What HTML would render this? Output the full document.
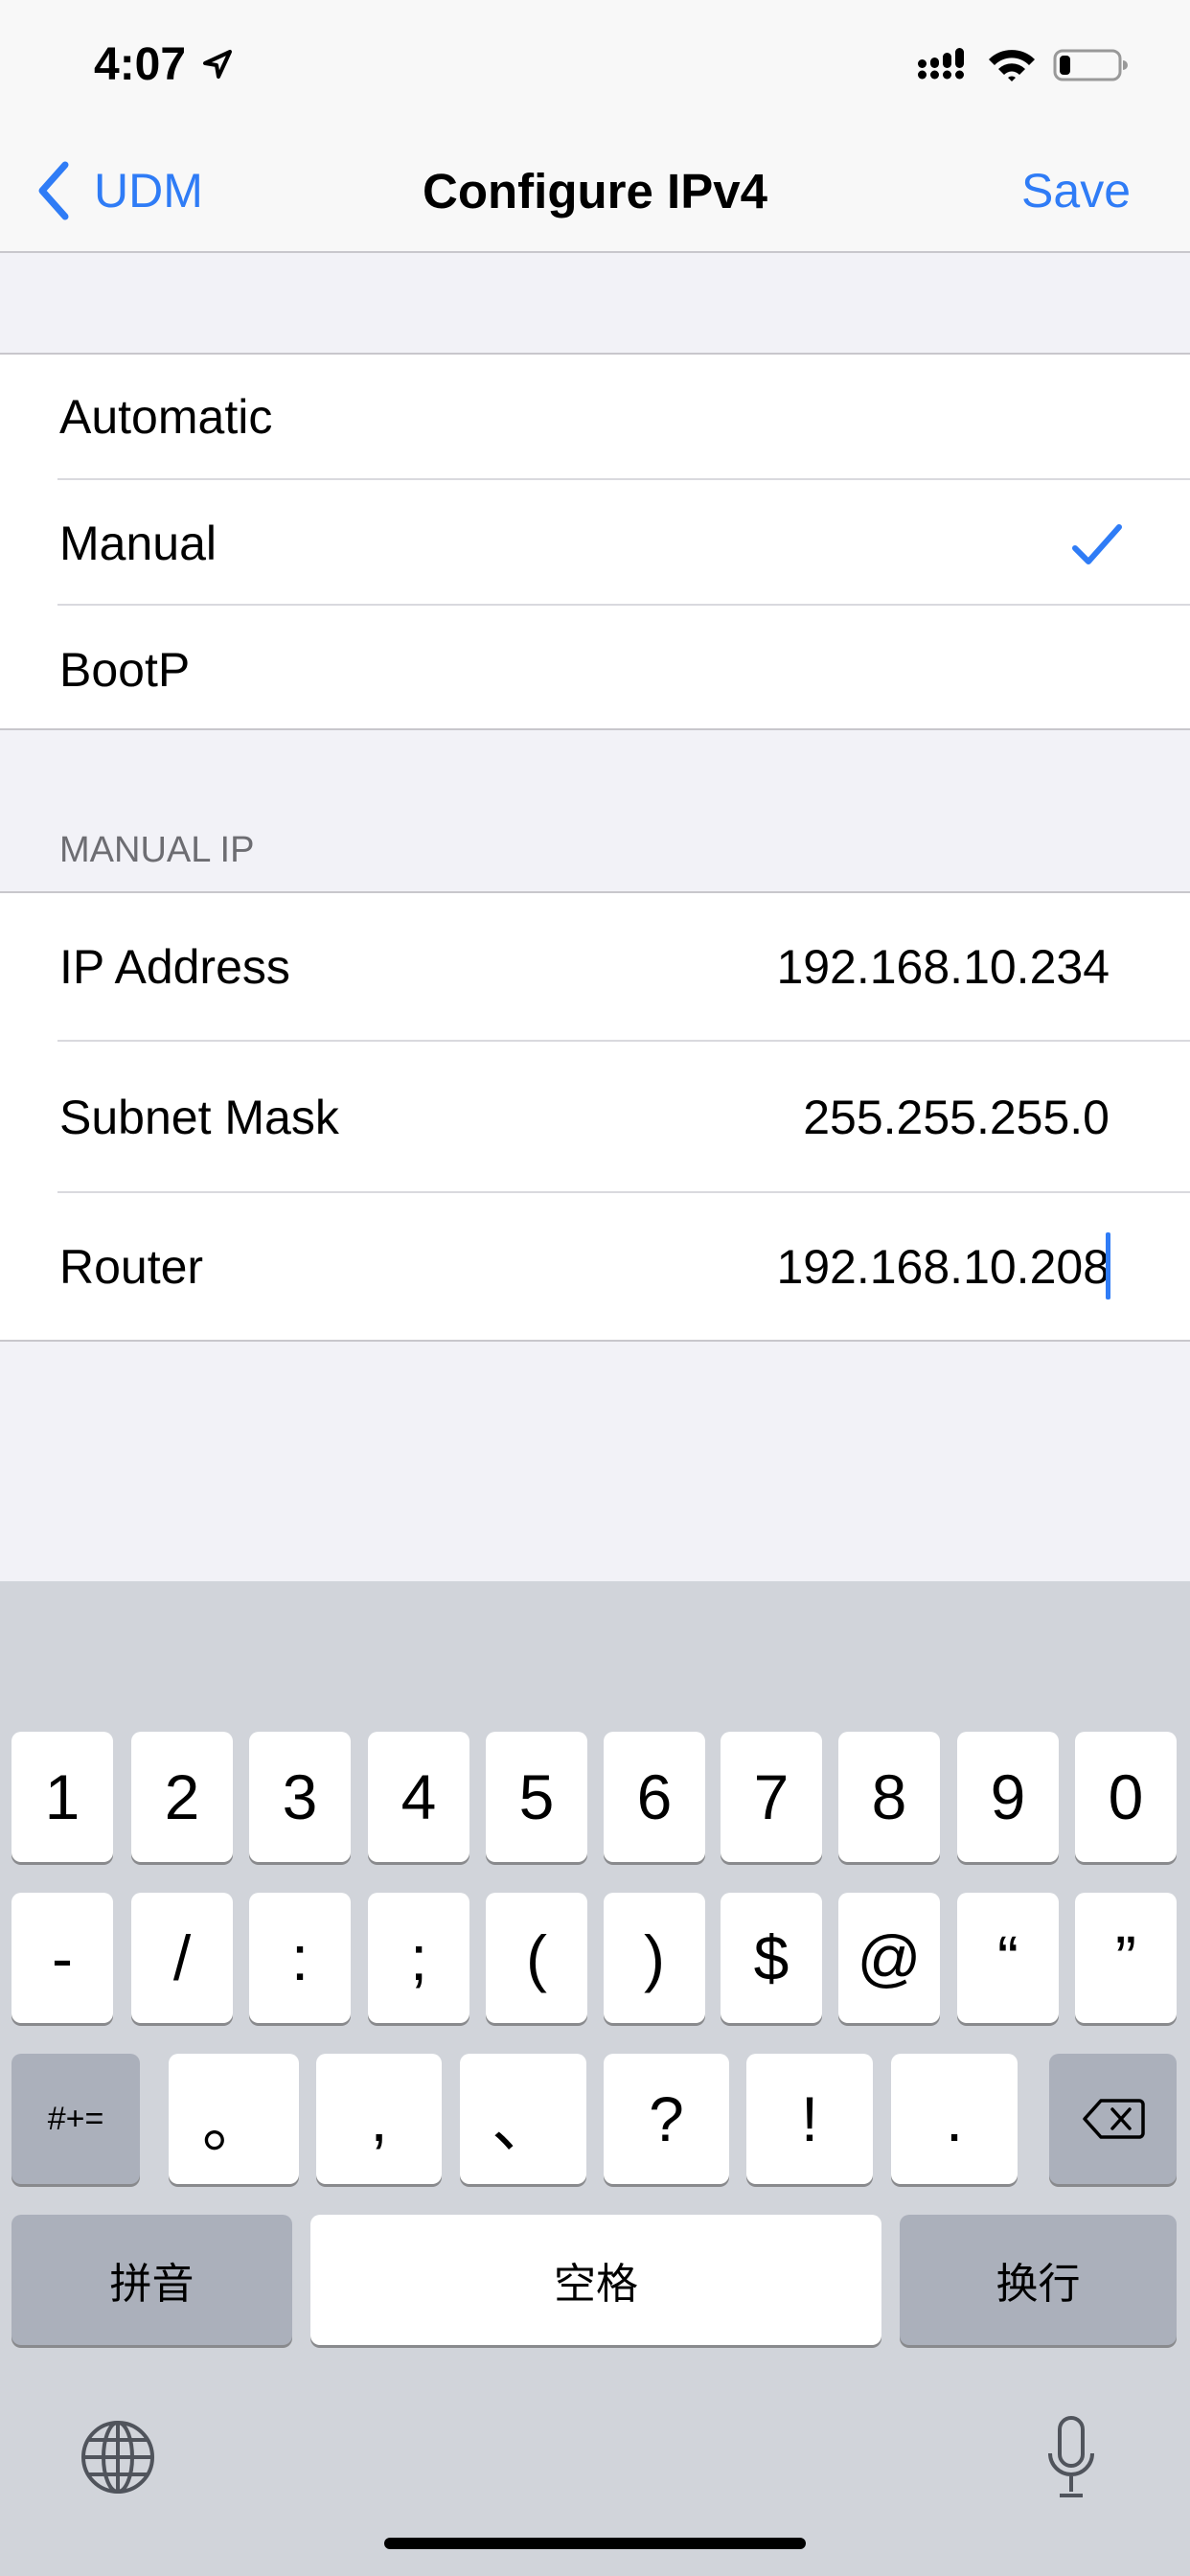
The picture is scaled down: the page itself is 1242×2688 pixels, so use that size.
<!DOCTYPE html>
<html><head><meta charset="utf-8"><style>
*{margin:0;padding:0;box-sizing:border-box}
body{width:1242px;height:2688px;background:#f2f2f7;font-family:"Liberation Sans","Noto Sans CJK SC",sans-serif;position:relative;overflow:hidden;color:#000}
.abs{position:absolute}
.nav{left:0;top:0;width:1242px;height:264px;background:#f8f8f8;border-bottom:2px solid #c8c7cc}
.white{background:#fff;left:0;width:1242px}
.row{position:absolute;left:62px;font-size:50px}
.sep{position:absolute;left:60px;right:0;height:2px;background:#d9d9de}
.hl{position:absolute;left:0;right:0;height:2px;background:#c8c7cc}
.val{position:absolute;right:84px;font-size:50px;text-align:right}
.kb{left:0;top:1650px;width:1242px;height:1038px;background:#d1d4da}
.k{position:absolute;background:#fff;border-radius:10px;box-shadow:0 3px 0 #898a8d;display:flex;align-items:center;justify-content:center;font-size:66px;height:136px}
.g{background:#abb0bb}
</style></head><body>
<div class="abs nav"></div>
<div class="abs" style="left:98px;top:40px;font-size:48px;font-weight:bold">4:07</div>
<svg class="abs" style="left:210px;top:50px" width="34" height="34" viewBox="0 0 34 34"><path d="M4 16 L30 4 L18 30 L16 18 Z" fill="none" stroke="#000" stroke-width="4" stroke-linejoin="round"/></svg>
<svg class="abs" style="left:958px;top:48px" width="220" height="40" viewBox="0 0 220 40">
<rect x="0" y="14" width="9" height="9" rx="4.5"/><rect x="13" y="12" width="9" height="11" rx="4.5"/><rect x="26" y="7" width="9" height="16" rx="4.5"/><rect x="39" y="2" width="9" height="21" rx="4.5"/>
<circle cx="4.5" cy="30" r="4.5"/><circle cx="17.5" cy="30" r="4.5"/><circle cx="30.5" cy="30" r="4.5"/><circle cx="43.5" cy="30" r="4.5"/>
<path d="M74 14 A34 34 0 0 1 122 14 L116 20 A25 25 0 0 0 80 20 Z"/><path d="M84 24 A20 20 0 0 1 112 24 L106 30 A11 11 0 0 0 90 30 Z"/><path d="M94 33 L98 37 L102 33 A6 6 0 0 0 94 33Z"/>
<rect x="143" y="5" width="68" height="30" rx="8" fill="none" stroke="#999" stroke-width="3"/><rect x="148" y="10" width="11" height="20" rx="4"/><path d="M214 15 a5 5 0 0 1 0 10 Z" fill="#999"/></svg>
<svg class="abs" style="left:36px;top:168px" width="40" height="62" viewBox="0 0 40 62"><path d="M32 4 L8 31 L32 58" fill="none" stroke="#2f7cf6" stroke-width="7" stroke-linecap="round" stroke-linejoin="round"/></svg>
<div class="abs" style="left:98px;top:170px;font-size:50px;color:#2f7cf6">UDM</div>
<div class="abs" style="left:0;width:1242px;top:170px;text-align:center;font-size:51px;font-weight:bold">Configure IPv4</div>
<div class="abs" style="right:62px;top:170px;font-size:50px;color:#2f7cf6">Save</div>

<div class="abs white" style="top:368px;height:394px">
<div class="hl" style="top:0"></div>
<div class="row" style="top:38px">Automatic</div>
<div class="sep" style="top:131px"></div>
<div class="row" style="top:170px">Manual</div>
<svg class="abs" style="left:1118px;top:178px" width="54" height="46" viewBox="0 0 54 46"><path d="M4 26 L18 40 L50 4" fill="none" stroke="#2f7cf6" stroke-width="6" stroke-linecap="round" stroke-linejoin="round"/></svg>
<div class="sep" style="top:262px"></div>
<div class="row" style="top:302px">BootP</div>
<div class="hl" style="top:392px"></div>
</div>
<div class="abs" style="left:62px;top:866px;font-size:38px;color:#6d6d72">MANUAL IP</div>
<div class="abs white" style="top:930px;height:470px">
<div class="hl" style="top:0"></div>
<div class="row" style="top:50px">IP Address</div><div class="val" style="top:50px">192.168.10.234</div>
<div class="sep" style="top:155px"></div>
<div class="row" style="top:207px">Subnet Mask</div><div class="val" style="top:207px">255.255.255.0</div>
<div class="sep" style="top:313px"></div>
<div class="row" style="top:363px">Router</div><div class="val" style="top:363px">192.168.10.208</div>
<div class="abs" style="left:1154px;top:356px;width:5px;height:70px;background:#2f7cf6;border-radius:2px"></div>
<div class="hl" style="top:468px"></div>
</div>

<div class="abs kb"></div>
<div class="k" style="left:12px;top:1807px;width:106px">1</div>
<div class="k" style="left:137px;top:1807px;width:106px">2</div>
<div class="k" style="left:260px;top:1807px;width:106px">3</div>
<div class="k" style="left:384px;top:1807px;width:106px">4</div>
<div class="k" style="left:507px;top:1807px;width:106px">5</div>
<div class="k" style="left:630px;top:1807px;width:106px">6</div>
<div class="k" style="left:752px;top:1807px;width:106px">7</div>
<div class="k" style="left:875px;top:1807px;width:106px">8</div>
<div class="k" style="left:999px;top:1807px;width:106px">9</div>
<div class="k" style="left:1122px;top:1807px;width:106px">0</div>
<div class="k" style="left:12px;top:1975px;width:106px">-</div>
<div class="k" style="left:137px;top:1975px;width:106px">/</div>
<div class="k" style="left:260px;top:1975px;width:106px">:</div>
<div class="k" style="left:384px;top:1975px;width:106px">;</div>
<div class="k" style="left:507px;top:1975px;width:106px">(</div>
<div class="k" style="left:630px;top:1975px;width:106px">)</div>
<div class="k" style="left:752px;top:1975px;width:106px">$</div>
<div class="k" style="left:875px;top:1975px;width:106px">@</div>
<div class="k" style="left:999px;top:1975px;width:106px">“</div>
<div class="k" style="left:1122px;top:1975px;width:106px">”</div>
<div class="k g" style="left:12px;top:2143px;width:134px;font-size:34px">#+=</div>
<div class="k" style="left:176px;top:2143px;width:136px">。</div>
<div class="k" style="left:330px;top:2143px;width:131px">,</div>
<div class="k" style="left:480px;top:2143px;width:132px">、</div>
<div class="k" style="left:630px;top:2143px;width:131px">?</div>
<div class="k" style="left:779px;top:2143px;width:132px">!</div>
<div class="k" style="left:930px;top:2143px;width:132px">.</div>
<div class="k g" style="left:1095px;top:2143px;width:133px"><svg width="66" height="44" viewBox="0 0 66 44"><path d="M20 3 H60 a4 4 0 0 1 4 4 V37 a4 4 0 0 1 -4 4 H20 L3 22 Z" fill="none" stroke="#000" stroke-width="3.5" stroke-linejoin="round"/><path d="M32 12 L50 32 M50 12 L32 32" stroke="#000" stroke-width="3.5" stroke-linecap="round"/></svg></div>
<div class="k g" style="left:12px;top:2311px;width:293px;font-size:44px">拼音</div>
<div class="k" style="left:324px;top:2311px;width:596px;font-size:44px">空格</div>
<div class="k g" style="left:939px;top:2311px;width:289px;font-size:44px">换行</div>
<svg class="abs" style="left:83px;top:2524px" width="80" height="80" viewBox="0 0 80 80" fill="none" stroke="#50545c" stroke-width="4"><circle cx="40" cy="40" r="36"/><ellipse cx="40" cy="40" rx="15" ry="36"/><path d="M40 4 V76 M4 40 H76 M10 22 H70 M10 58 H70"/></svg>
<svg class="abs" style="left:1090px;top:2520px" width="56" height="90" viewBox="0 0 56 90" fill="none" stroke="#50545c" stroke-width="4"><rect x="16" y="3" width="24" height="50" rx="12"/><path d="M6 40 A22 22 0 0 0 50 40 M28 62 V80 M16 84 H40"/></svg>
<div class="abs" style="left:401px;top:2648px;width:440px;height:12px;border-radius:6px;background:#000"></div>
</body></html>
